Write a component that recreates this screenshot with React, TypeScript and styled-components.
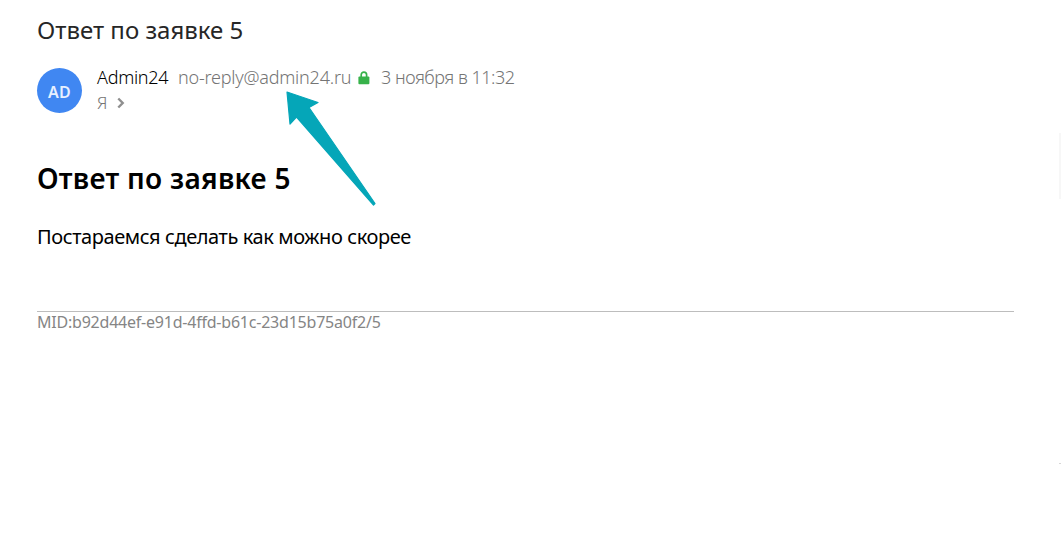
import React,{FC} from 'react';
import styled, {createGlobalStyle} from 'styled-components';

const GlobalStyle = createGlobalStyle`
    body {
        margin: 0;
        background: #fff;
        overflow: hidden;
    }
`;

const Page = styled.div`
    position: relative;
    box-sizing: border-box;
    width: 1061px;
    height: 537px;
    padding: 14px 47px 0 37px;
    font-family: 'Noto Sans', sans-serif;
    background: #fff;
    overflow: hidden;
    white-space: nowrap;
`;

const Subject = styled.h1`
    margin: 0;
    font-size: 24px;
    line-height: 32px;
    font-weight: 400;
    color: #262626;
`;

const Header = styled.header`
    display: flex;
    gap: 15px;
    height: 94px;
    margin-top: 19px;
`;

const Avatar = styled.div`
    display: flex;
    align-items: center;
    justify-content: center;
    box-sizing: border-box;
    width: 45px;
    height: 45px;
    margin-top: 3px;
    padding-top: 2px;
    border-radius: 50%;
    background: #4087f2;
    color: #e6f0ff;
    font-size: 16px;
    font-weight: 600;
    letter-spacing: 0.3px;
`;

const Info = styled.div`
    display: flex;
    flex-direction: column;
`;

const Line = styled.div<{$size: number}>`
    display: flex;
    align-items: center;
    height: 25px;
    line-height: 25px;
    font-size: ${({$size}) => $size}px;
    font-weight: 300;
    color: #757575;
`;

const Sender = styled.span`
    width: 81px;
    letter-spacing: -0.3px;
    color: #000;
`;

const Email = styled.span`
    width: 180px;
    letter-spacing: -0.22px;
`;

const SentAt = styled.span`
    margin-left: 11px;
    letter-spacing: -0.48px;
`;

const Recipient = styled.span`
    width: 20px;
`;

const Heading = styled.h2`
    margin: 0;
    font-size: 28px;
    line-height: 38px;
    font-weight: 600;
    letter-spacing: 0.28px;
    color: #000;
`;

const Text = styled.p`
    margin: 26px 0 60px;
    font-size: 20px;
    line-height: 28px;
    letter-spacing: -0.41px;
    color: #000;
`;

const Footer = styled.footer`
    border-top: 1px solid #bdbdbd;
    font-size: 16px;
    line-height: 20px;
    letter-spacing: -0.22px;
    color: #858585;
`;

const Pointer = styled.svg`
    position: absolute;
    left: 280px;
    top: 85px;
`;

const EdgeMark = styled.div<{$top: number; $height: number; $color: string}>`
    position: absolute;
    right: 0;
    top: ${({$top}) => $top}px;
    width: 2px;
    height: ${({$height}) => $height}px;
    background: ${({$color}) => $color};
`;

const LockIcon: FC = () => (
    <svg width="12" height="14" viewBox="0 0 12 14">
        <path d="M3.2 6V3.8a2.7 2.7 0 0 1 5.4 0V6" fill="none" stroke="#37b24a" strokeWidth="1.7"/>
        <rect x="0.4" y="5.4" width="11" height="7.9" rx="1" fill="#37b24a"/>
    </svg>
);

const ChevronIcon: FC = () => (
    <svg width="8" height="12" viewBox="0 0 8 12">
        <path d="M1.3 1.5 5.7 6 1.3 10.5" fill="none" stroke="#8f8f8f" strokeWidth="2.4"/>
    </svg>
);

const App: FC = () => {
    return (
        <Page>
            <GlobalStyle/>
            <Subject>Ответ по заявке 5</Subject>
            <Header>
                <Avatar>AD</Avatar>
                <Info>
                    <Line $size={18}>
                        <Sender>Admin24</Sender>
                        <Email>no-reply@admin24.ru</Email>
                        <LockIcon/>
                        <SentAt>3 ноября в 11:32</SentAt>
                    </Line>
                    <Line $size={17}>
                        <Recipient>Я</Recipient>
                        <ChevronIcon/>
                    </Line>
                </Info>
            </Header>
            <Heading>Ответ по заявке 5</Heading>
            <Text>Постараемся сделать как можно скорее</Text>
            <Footer>MID:b92d44ef-e91d-4ffd-b61c-23d15b75a0f2/5</Footer>
            <Pointer width="100" height="125" viewBox="0 0 100 125">
                <path
                    d="M7 7 38 17.5 29 22.5 95 118.5 93.5 120 16.5 32 10 39Z"
                    fill="#05a6b8"
                    stroke="#05a6b8"
                    strokeWidth="1.2"
                    strokeLinejoin="round"
                />
            </Pointer>
            <EdgeMark $top={133} $height={66} $color="#f7f7f7"/>
            <EdgeMark $top={463} $height={1} $color="#d6d6d6"/>
        </Page>
    );
};

export default App;
